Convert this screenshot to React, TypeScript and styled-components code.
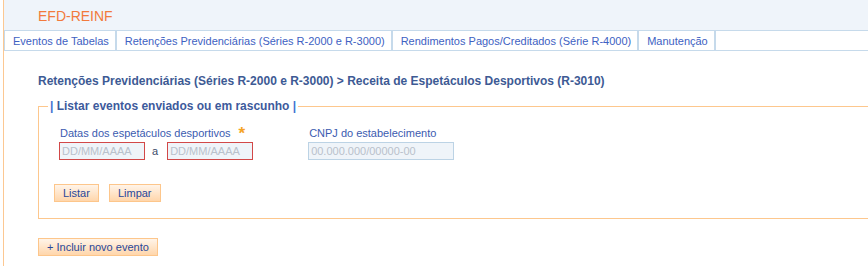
import React from 'react'
import styled, { createGlobalStyle } from 'styled-components'

const GlobalStyle = createGlobalStyle`
  html, body {
    margin: 0;
    padding: 0;
    background: #ffffff;
    overflow: hidden;
  }
  body {
    font-family: "Liberation Sans", Arial, sans-serif;
  }
`

const Page = styled.div`
  margin-left: 3px;
  border-left: 1px solid #fcc892;
  min-height: 100vh;
  overflow: hidden;
`

const Header = styled.div`
  height: 30px;
  background: #eff4fa;
  padding-left: 34px;
  display: flex;
  align-items: center;
`

const Title = styled.h1`
  margin: 2px 0 0;
  font-size: 14px;
  font-weight: normal;
  color: #f27a3c;
`

const TabBar = styled.ul`
  display: flex;
  margin: 0;
  padding: 0;
  list-style: none;
  height: 19px;
  border-top: 1px solid #c6daeb;
  border-bottom: 1px solid #c6daeb;
  border-left: 1px solid #c6daeb;
`

const Tab = styled.li`
  display: flex;
  align-items: center;
  padding: 0 6px 0 8px;
  border-right: 2px solid #c6daeb;
  font-size: 11px;
  color: #4061c2;
  white-space: nowrap;
`

const Content = styled.div`
  padding: 22px 0 0 34px;
`

const Breadcrumb = styled.h2`
  margin: 0;
  font-size: 12px;
  line-height: 16px;
  font-weight: bold;
  color: #3d5a94;
`

const Fieldset = styled.fieldset`
  margin: 10px 0 0;
  width: 860px;
  min-width: 0;
  padding: 13px 0 16px 0;
  border: 1px solid #fdc78d;
  border-right: none;
  box-sizing: border-box;
`

const Legend = styled.legend`
  margin-left: 9px;
  padding: 0 2px;
  font-size: 12px;
  font-weight: bold;
  color: #3d5a9c;
`

const Pipe = styled.span`
  color: #3f73d0;
`

const FieldRow = styled.div`
  display: flex;
  gap: 55px;
  padding-left: 20px;
`

const Field = styled.div`
  display: flex;
  flex-direction: column;
  gap: 2px;
`

const Label = styled.label`
  display: flex;
  align-items: flex-start;
  height: 14px;
  padding-left: 1px;
  font-size: 11px;
  line-height: 14px;
  color: #3b5bb0;
`

const Required = styled.span`
  margin: 1px 0 0 8px;
  font-size: 17px;
  line-height: 14px;
  font-weight: bold;
  color: #f5a325;
`

const DateRange = styled.div`
  display: flex;
  align-items: center;
`

const Sep = styled.span`
  margin: 0 9px 0 7px;
  font-size: 11px;
  color: #3b4a6a;
`

const Input = styled.input<{ $invalid?: boolean; $width: number }>`
  box-sizing: border-box;
  width: ${p => p.$width}px;
  height: 18px;
  margin: 0;
  padding: 0 2px;
  border: 1px solid ${p => (p.$invalid ? '#d24848' : '#bcd3e5')};
  background: #eff4f9;
  font-family: "Liberation Sans", Arial, sans-serif;
  font-size: 11px;
  color: #333;
  outline: none;
  &::placeholder {
    color: #b9c1cb;
  }
`

const Actions = styled.div`
  display: flex;
  gap: 10px;
  margin-top: 24px;
  padding-left: 15px;
`

const Button = styled.button`
  box-sizing: border-box;
  height: 18px;
  margin: 0;
  padding: 0 8px;
  border: 1px solid #fdc68b;
  background: linear-gradient(#fff4e9, #ffd6ab);
  font-family: "Liberation Sans", Arial, sans-serif;
  font-size: 11px;
  line-height: 16px;
  color: #28479a;
  cursor: pointer;
`

const Footer = styled.div`
  margin-top: 18px;
`

const tabs = [
  'Eventos de Tabelas',
  'Retenções Previdenciárias (Séries R-2000 e R-3000)',
  'Rendimentos Pagos/Creditados (Série R-4000)',
  'Manutenção',
]

export default function App() {
  return (
    <>
      <GlobalStyle />
      <Page>
        <Header>
          <Title>EFD-REINF</Title>
        </Header>
        <TabBar>
          {tabs.map(t => (
            <Tab key={t}>{t}</Tab>
          ))}
        </TabBar>
        <Content>
          <Breadcrumb>
            Retenções Previdenciárias (Séries R-2000 e R-3000) &gt; Receita de Espetáculos Desportivos (R-3010)
          </Breadcrumb>
          <Fieldset>
            <Legend>
              <Pipe>|</Pipe> Listar eventos enviados ou em rascunho <Pipe>|</Pipe>
            </Legend>
            <FieldRow>
              <Field>
                <Label>
                  Datas dos espetáculos desportivos<Required>*</Required>
                </Label>
                <DateRange>
                  <Input $invalid $width={86} placeholder="DD/MM/AAAA" />
                  <Sep>a</Sep>
                  <Input $invalid $width={86} placeholder="DD/MM/AAAA" />
                </DateRange>
              </Field>
              <Field>
                <Label>CNPJ do estabelecimento</Label>
                <Input $width={146} placeholder="00.000.000/00000-00" disabled />
              </Field>
            </FieldRow>
            <Actions>
              <Button>Listar</Button>
              <Button>Limpar</Button>
            </Actions>
          </Fieldset>
          <Footer>
            <Button>+ Incluir novo evento</Button>
          </Footer>
        </Content>
      </Page>
    </>
  )
}
